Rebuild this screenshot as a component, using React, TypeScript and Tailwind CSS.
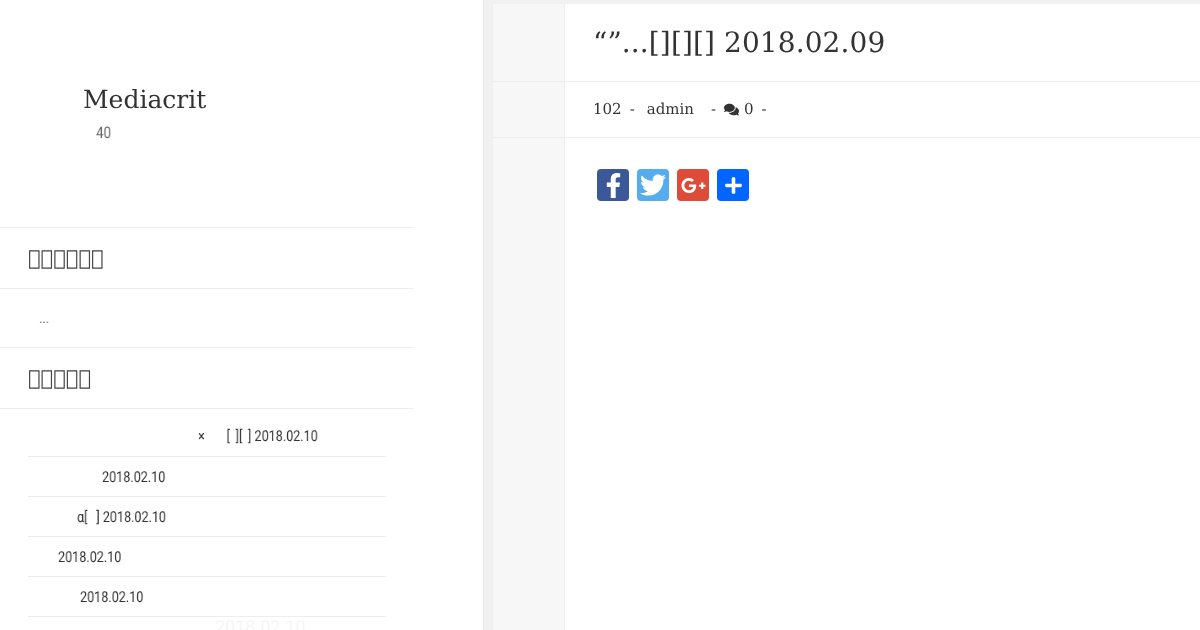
import type { ReactNode } from "react";
import { FaFacebookF, FaTwitter, FaPlus, FaComments, FaGooglePlusG } from "react-icons/fa";

const serif = "font-['DejaVu_Serif',serif]";
const tofu = "\uE000";

function Row({ pt, pl, children }: { pt?: string; pl: string; children: ReactNode }) {
  return (
    <div className={`h-10 shrink-0 flex items-center border-b border-[#eeeeee] text-[15px] text-[#333] ${pl} ${pt ?? ""}`}>
      <span className="inline-block origin-left scale-x-[0.84] whitespace-pre will-change-transform">{children}</span>
    </div>
  );
}

function Heading({ n }: { n: number }) {
  return (
    <div className={`w-[414px] h-[61px] shrink-0 pl-[28px] pt-[2px] flex items-center border-b border-[#eeeeee] ${serif} text-[21px] text-[#444]`}>
      <span className="will-change-transform">{tofu.repeat(n)}</span>
    </div>
  );
}

function MainRow({ className, children }: { className: string; children?: ReactNode }) {
  return (
    <div className={`flex shrink-0 border-b border-[#eeeeee] ${className}`}>
      <div className="w-[72px] shrink-0 bg-[#f7f7f7] border-r border-[#eeeeee]" />
      <div className="flex-1 flex items-center pl-[28px] min-w-0">{children}</div>
    </div>
  );
}

function Share({ bg, children }: { bg: string; children: ReactNode }) {
  return <div className={`w-8 h-8 rounded-[4px] flex items-center justify-center text-white ${bg}`}>{children}</div>;
}

export default function App() {
  return (
    <div className="w-[1200px] h-[630px] overflow-hidden flex bg-white font-['Roboto',sans-serif] [text-rendering:geometricPrecision]">
      <aside className="w-[484px] shrink-0 bg-white border-r border-[#e5e5e5] flex flex-col">
        <div className="w-[414px] h-[228px] shrink-0 pl-[83px] pt-[85px] border-b border-[#eeeeee]">
          <div className={`${serif} text-[25px] leading-[30px] text-[#333] will-change-transform`}>Mediacrit</div>
          <div className="pl-[13px] mt-[8px] text-[16px] leading-[20px] text-[#666]">
            <span className="inline-block origin-left scale-x-[0.84] will-change-transform">40</span>
          </div>
        </div>
        <Heading n={6} />
        <div className="w-[414px] h-[59px] shrink-0 pl-[39px] pt-[19px] border-b border-[#eeeeee] text-[15px] leading-[20px] text-[#666]">
          <span className="inline-block origin-left scale-x-[0.84] will-change-transform">...</span>
        </div>
        <Heading n={5} />
        <div className="w-[358px] shrink-0 ml-[28px] mt-[8px]">
          <Row pl="pl-[170px]">{"×       [\u2009 ][\u2009 ] 2018.02.10"}</Row>
          <Row pt="pt-[2px]" pl="pl-[74px]">2018.02.10</Row>
          <Row pt="pt-[2px]" pl="pl-[49px]">{"α[  \u2009] 2018.02.10"}</Row>
          <Row pt="pt-[2px]" pl="pl-[30px]">2018.02.10</Row>
          <Row pt="pt-[2px]" pl="pl-[52px]">2018.02.10</Row>
          <div className="pl-[187px] pt-[1px] text-[18px] leading-[20px] text-[#f6f6f6]">2018.02.10</div>
        </div>
      </aside>
      <main className="flex-1 bg-[#f1f1f1] pl-[8px] pt-[4px] min-w-0">
        <div className="h-[626px] flex flex-col bg-white border-l border-[#eeeeee]">
          <MainRow className="h-[78px]">
            <h1 className={`${serif} text-[28px] text-[#333] tracking-[0.1px] whitespace-pre will-change-transform`}>“”...[][][] 2018.02.09</h1>
          </MainRow>
          <MainRow className="h-[56px]">
            <div className={`${serif} text-[15px] text-[#333] flex items-center whitespace-pre will-change-transform`}>
              <span>102</span>
              <span className="ml-[8px]">-</span>
              <span className="ml-[12px]">admin</span>
              <span className="ml-[17px]">-</span>
              <FaComments className="ml-[8px] w-[15px] h-[15px] text-[#333]" />
              <span className="ml-[5px]">0</span>
              <span className="ml-[8px]">-</span>
            </div>
          </MainRow>
          <div className="flex flex-1">
            <div className="w-[72px] shrink-0 bg-[#f7f7f7] border-r border-[#eeeeee]" />
            <div className="flex-1 pl-[32px] pt-[31px] flex items-start gap-2">
              <Share bg="bg-[#3b5998]"><FaFacebookF className="w-[25px] h-[25px]" /></Share>
              <Share bg="bg-[#55acee]"><FaTwitter className="w-[26px] h-[26px]" /></Share>
              <Share bg="bg-[#dd4b39]"><FaGooglePlusG className="w-[25px] h-[25px]" /></Share>
              <Share bg="bg-[#0166ff]"><FaPlus className="w-[19px] h-[19px]" /></Share>
            </div>
          </div>
        </div>
      </main>
    </div>
  );
}
